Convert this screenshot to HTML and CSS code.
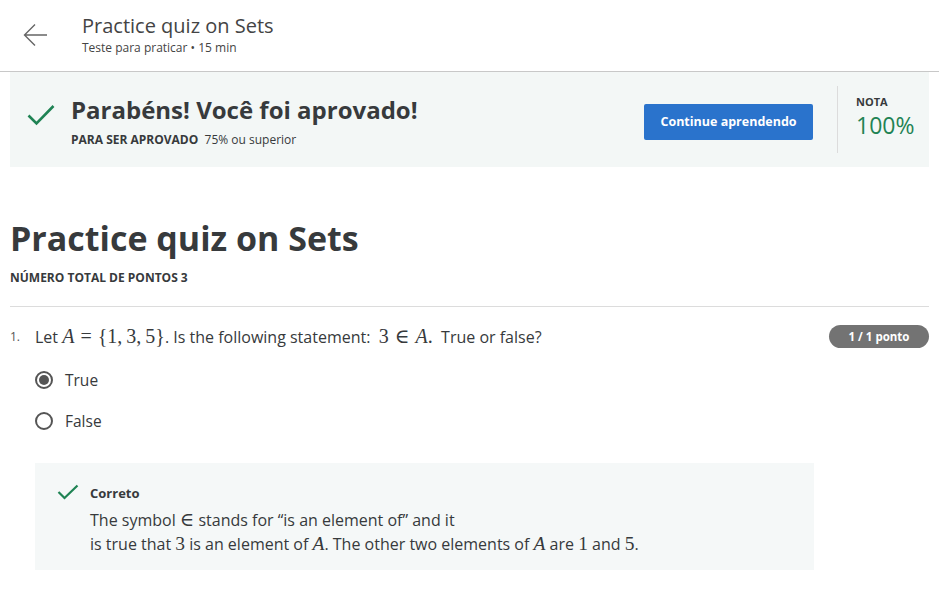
FILE: index.html
```html
<!DOCTYPE html>
<html>
<head>
<meta charset="utf-8">
<link rel="stylesheet" href="styles.css">
</head>
<body>
<header class="topbar">
  <div class="back">
    <svg width="26" height="26" viewBox="0 0 26 26"><path d="M24 13H2M12 2.5L1.5 13L12 23.5" fill="none" stroke="#666" stroke-width="1.4"/></svg>
  </div>
  <div class="titles">
    <div class="top-title">Practice quiz on Sets</div>
    <div class="top-sub">Teste para praticar • 15 min</div>
  </div>
</header>
<main class="content">
  <section class="banner">
    <div class="banner-left">
      <svg class="check-big" width="28" height="22" viewBox="0 0 28 22"><path d="M1.5 11.5L9.5 19.5L26.5 2" fill="none" stroke="#1f8354" stroke-width="2.6"/></svg>
      <div>
        <div class="banner-title">Parabéns! Você foi aprovado!</div>
        <div class="banner-sub"><b>PARA SER APROVADO</b>&nbsp; 75% ou superior</div>
      </div>
    </div>
    <button class="btn">Continue aprendendo</button>
    <div class="grade">
      <div class="grade-label">NOTA</div>
      <div class="grade-value">100%</div>
    </div>
  </section>

  <h1 class="quiz-title">Practice quiz on Sets</h1>
  <div class="points">NÚMERO TOTAL DE PONTOS 3</div>
  <hr class="sep">

  <section class="question">
    <div class="q-row">
      <span class="q-num">1.</span>
      <span class="q-text">Let <span class="m"><i>A</i><span class="rel">=</span>{1,&thinsp;3,&thinsp;5}</span>. Is the following statement: &nbsp;<span class="m">3<span class="rel">∈</span><i>A</i>.</span> &nbsp;True or false?</span>
      <span class="badge">1 / 1 ponto</span>
    </div>
    <div class="options">
      <label class="opt"><span class="radio checked"></span>True</label>
      <label class="opt"><span class="radio"></span>False</label>
    </div>
    <div class="feedback">
      <svg class="check-small" width="22" height="16" viewBox="0 0 22 16"><path d="M1.5 8L7.5 14L20.5 1.5" fill="none" stroke="#1f8354" stroke-width="2.2"/></svg>
      <div>
        <div class="fb-title">Correto</div>
        <div class="fb-text">The symbol <span class="m">∈</span> stands for “is an element of” and it<br>is true that <span class="m">3</span> is an element of <span class="m"><i>A</i></span>. The other two elements of <span class="m"><i>A</i></span> are <span class="m">1</span> and <span class="m">5</span>.</div>
      </div>
    </div>
  </section>
</main>
</body>
</html>
```
FILE: styles.css
```css
* { box-sizing: border-box; }
body {
  margin: 0;
  font-family: "Open Sans", "Noto Sans", sans-serif;
  color: #373a3c;
  background: #fff;
}
.topbar {
  height: 72px;
  border-bottom: 1px solid #c8c8c8;
  display: flex;
  align-items: flex-start;
}
.back {
  width: 82px;
  padding: 22px 0 0 23px;
}
.titles { padding-top: 12px; }
.top-title {
  font-size: 20px;
  line-height: 27px;
  color: #444;
}
.top-sub {
  font-size: 12px;
  line-height: 15px;
  color: #444;
  margin-top: 1px;
}
.content { padding: 0 10px; }
.banner {
  background: #f3f7f6;
  height: 95px;
  display: flex;
  align-items: center;
  padding: 0 0 0 17px;
}
.banner-left {
  display: flex;
  align-items: flex-start;
  flex: 1;
}
.check-big { margin-top: 11px; margin-right: 16px; }
.banner-title {
  font-size: 24px;
  font-weight: 700;
  line-height: 32px;
  margin-top: 1px;
  color: #373a3c;
}
.banner-sub {
  font-size: 12px;
  line-height: 15px;
  margin-top: 6px;
  color: #373a3c;
}
.btn {
  background: #2a73cc;
  color: #fff;
  border: 0;
  border-radius: 2px;
  font-family: inherit;
  font-size: 12.5px;
  font-weight: 700;
  width: 169px;
  height: 36px;
  margin-right: 24px;
  margin-top: 4px;
}
.grade {
  border-left: 1px solid #dcdcdc;
  height: 67px;
  width: 92px;
  padding: 9px 0 0 18px;
}
.grade-label {
  font-size: 11px;
  font-weight: 700;
  line-height: 14px;
}
.grade-value {
  font-size: 23px;
  line-height: 24px;
  margin-top: 4px;
  color: #1f8354;
}
.quiz-title {
  margin: 48px 0 0;
  font-size: 34px;
  line-height: 46px;
  font-weight: 700;
  color: #373a3c;
}
.points {
  font-size: 12px;
  font-weight: 700;
  margin-top: 9px;
  line-height: 16px;
}
.sep {
  border: 0;
  border-top: 1px solid #dcdcdc;
  margin: 20px 0 0;
}
.question { padding-top: 17px; }
.q-row {
  display: flex;
  align-items: center;
  height: 24px;
}
.q-num {
  font-size: 12px;
  width: 25px;
  color: #555;
}
.q-text {
  font-size: 16px;
  flex: 1;
}
.m {
  font-family: "Liberation Serif", "DejaVu Serif", serif;
  font-size: 20px;
}
.m i { font-style: italic; }
.rel { margin: 0 6px; }
.badge {
  background: #737373;
  color: #fff;
  font-size: 11.5px;
  font-weight: 700;
  border-radius: 12px;
  width: 100px;
  height: 23px;
  line-height: 23px;
  text-align: center;
}
.options {
  padding: 21px 0 0 25px;
  display: flex;
  flex-direction: column;
  gap: 19px;
}
.opt {
  display: flex;
  align-items: center;
  font-size: 15.5px;
  height: 22px;
}
.radio {
  width: 18px;
  height: 18px;
  border: 2px solid #555;
  border-radius: 50%;
  margin-right: 12px;
  display: flex;
  align-items: center;
  justify-content: center;
}
.radio.checked::after {
  content: "";
  width: 10px;
  height: 10px;
  border-radius: 50%;
  background: #555;
}
.feedback {
  margin: 31px 0 0 25px;
  width: 779px;
  background: #f5f8f8;
  padding: 19px 0 14px 22px;
  display: flex;
  align-items: flex-start;
}
.check-small { margin-top: 2px; margin-right: 11px; }
.fb-title {
  font-size: 13px;
  font-weight: 700;
  line-height: 20px;
  margin-top: 1px;
}
.fb-text {
  font-size: 16px;
  line-height: 24px;
  margin-top: 5px;
}
.fb-text .m { font-size: 19.5px; }
```
